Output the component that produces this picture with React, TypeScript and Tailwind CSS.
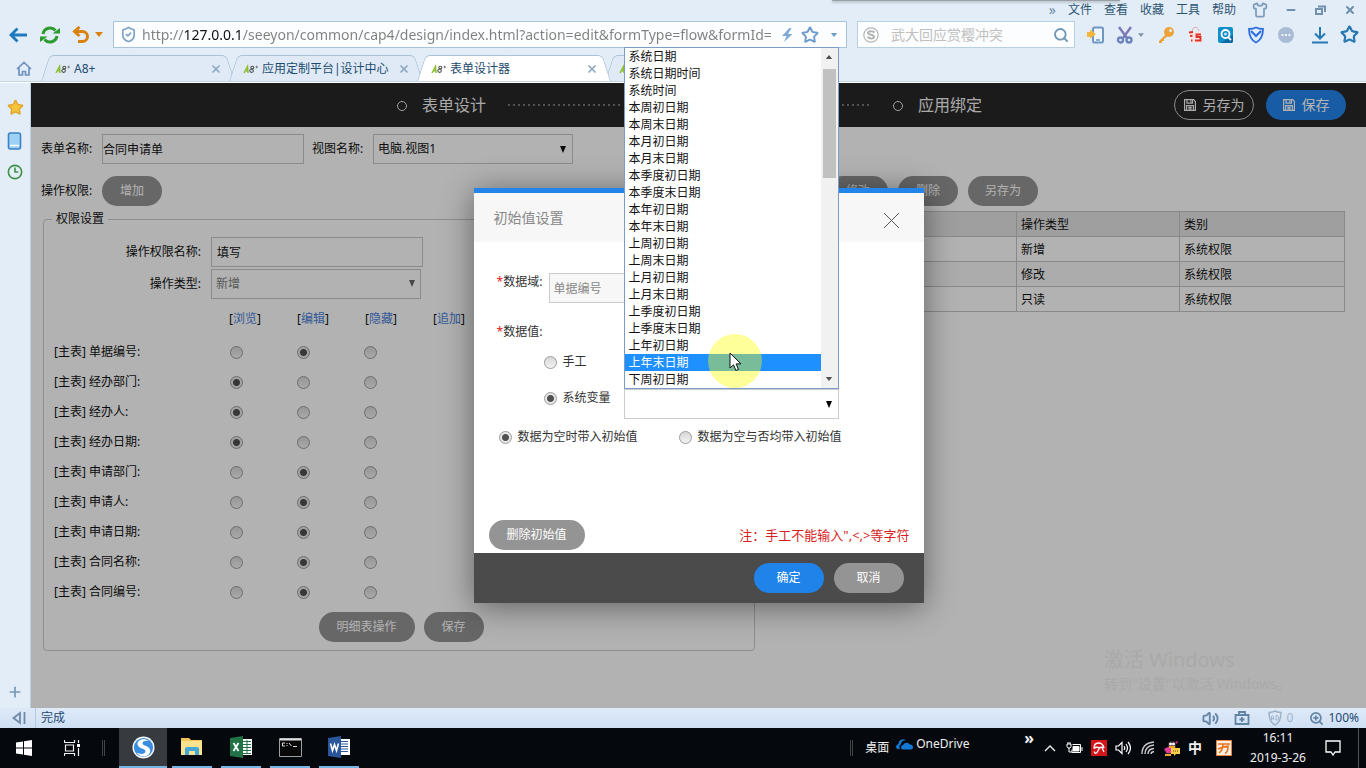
import { ReactNode } from "react";
import {
	ArrowLeft,
	Clock3,
	Home,
	Minus,
	Plus,
	Search,
	Shirt,
	ShieldCheck,
	Star,
	Volume2,
	X,
	ZoomIn,
} from "lucide-react";

const MENUS = ["文件", "查看", "收藏", "工具", "帮助"];

const TABS = [
	{ title: "A8+", active: false },
	{ title: "应用定制平台|设计中心", active: false },
	{ title: "表单设计器", active: true },
	{ title: "", active: false },
];

const FIELDS = [
	{ name: "单据编号", checked: 1 },
	{ name: "经办部门", checked: 0 },
	{ name: "经办人", checked: 0 },
	{ name: "经办日期", checked: 0 },
	{ name: "申请部门", checked: 1 },
	{ name: "申请人", checked: 1 },
	{ name: "申请日期", checked: 1 },
	{ name: "合同名称", checked: 1 },
	{ name: "合同编号", checked: 1 },
];

const MODES = ["浏览", "编辑", "隐藏", "追加"];

const VARIABLES = [
	"系统日期",
	"系统日期时间",
	"系统时间",
	"本周初日期",
	"本周末日期",
	"本月初日期",
	"本月末日期",
	"本季度初日期",
	"本季度末日期",
	"本年初日期",
	"本年末日期",
	"上周初日期",
	"上周末日期",
	"上月初日期",
	"上月末日期",
	"上季度初日期",
	"上季度末日期",
	"上年初日期",
	"上年末日期",
	"下周初日期",
];

const ACTIVE_VARIABLE = "上年末日期";

const URL_TEXT =
	"http://127.0.0.1/seeyon/common/cap4/design/index.html?action=edit&formType=flow&formId=";

/* ---------- shared bits ---------- */

const Caret = ({ className }: { className: string }) => (
	<svg viewBox="0 0 8 5" className={className} aria-hidden="true">
		<path d="M0 0h8L4 5z" fill="currentColor" />
	</svg>
);

const Arrow = ({ className }: { className: string }) => (
	<svg viewBox="0 0 6 7" className={`h-[7px] w-[6px] ${className}`} aria-hidden="true">
		<path d="M0 0h6L3 7z" fill="currentColor" />
	</svg>
);

const Floppy = () => (
	<svg viewBox="0 0 12 12" className="h-3 w-3" fill="none" stroke="currentColor" strokeWidth="1.200" aria-hidden="true">
		<path d="M.6.6h9l1.800 1.800v9H.6zM3 .6v3.600h5.500V.6M6.800 1.500v1.800M2.600 11.400V6.600h6.800v4.800M4.300 8.300h3.400M4.300 9.900h3.400" />
	</svg>
);

type RadioProps = { name: string; label: string; checked?: boolean; id?: string };

const Radio = ({ name, label, checked, id }: RadioProps) => (
	<input
		type="radio"
		id={id}
		name={name}
		aria-label={id ? undefined : label}
		defaultChecked={checked}
		className="h-[13px] w-[13px] shrink-0 appearance-none rounded-full border border-[#9b9b9b] bg-[linear-gradient(#d8d8d8,#f2f2f2)] checked:bg-[radial-gradient(circle,#505050_0,#505050_3px,#e8e8e8_4px)]"
	/>
);

const PillButton = ({ children, className }: { children: ReactNode; className: string }) => (
	<button
		type="button"
		className={`h-[30px] rounded-full text-[12px] leading-[18px] text-white ${className}`}
	>
		{children}
	</button>
);

/* ---------- browser chrome ---------- */

const MenuRow = () => (
	<div className="relative flex h-5 items-center justify-end pr-[10px] text-[12px] text-[#2f5470]">
		<div className="absolute right-[246px] top-0 h-px w-[288px] bg-[#9aa0a6] shadow-[0_1px_3px_#7b8288]" />
		<span className="mr-3 text-[14px] leading-4 text-[#6f8ba6]">»</span>
		<nav className="flex gap-3 leading-4">
			{MENUS.map((m) => (
				<button type="button" key={m}>
					{m}
				</button>
			))}
		</nav>
		<Shirt className="ml-4 h-4 w-4 text-[#7f9cb8]" strokeWidth={2.6} />
		<button type="button" aria-label="最小化" className="ml-[17px] text-[#7090ae]">
			<Minus className="h-3 w-3" strokeWidth={4} />
		</button>
		<button type="button" aria-label="还原" className="ml-[18px]">
			<svg viewBox="0 0 11 11" className="h-[11px] w-[11px]" fill="none" stroke="#7090ae" strokeWidth="2">
				<path d="M1 4h6v5H1zM3 1.500h7v5.500" />
			</svg>
		</button>
		<button type="button" aria-label="关闭" className="ml-[18px] text-[#7090ae]">
			<X className="h-3 w-3" strokeWidth={4} />
		</button>
	</div>
);

const ToolIcons = () => (
	<div className="flex w-[291px] shrink-0 items-center pl-[12px]">
		<svg viewBox="0 0 18 18" className="h-[18px] w-[18px]">
			<rect x="6" y="1.500" width="10" height="15" rx="1.500" fill="#eef5fc" stroke="#6f97c4" strokeWidth="2" />
			<path d="M9 14h4" stroke="#6f97c4" strokeWidth="1.500" />
			<path d="M0 6h3V3.500L9 8l-6 4.500V11H0z" fill="#f5b73b" />
		</svg>
		<svg viewBox="0 0 18 18" className="ml-[11px] h-[18px] w-[18px]" fill="none" strokeWidth="2.400">
			<path d="M3 1l8 11M15 1L7 12" stroke="#7d78b8" />
			<circle cx="4.500" cy="14" r="2.500" stroke="#6d84bd" />
			<circle cx="13" cy="14" r="2.500" stroke="#6d84bd" />
		</svg>
		<Caret className="ml-1 h-[4px] w-[6px] text-[#7f93a8]" />
		<svg viewBox="0 0 18 18" className="ml-[13px] h-[18px] w-[18px]">
			<path d="M9 8L2 15v2h3v-2h2v-2l4-3" fill="#eda23a" />
			<circle cx="12" cy="6" r="5" fill="#eda23a" />
			<circle cx="13.500" cy="4.500" r="1.500" fill="#e2edf8" />
		</svg>
		<svg viewBox="0 0 16 18" className="ml-[13px] h-[18px] w-4">
			<path d="M4 6c0-6 6-6 7-1" fill="none" stroke="#d9a8a8" />
			<path d="M1 7l13-2v12H3z" fill="#fae6e4" />
			<path d="M13 8.500H8.500V11h4v3.500H7M1 6.500l4-.5M2 10l2.500-.3M3 14.500h1.500" fill="none" stroke="#dd3328" strokeWidth="1.900" />
		</svg>
		<svg viewBox="0 0 16 18" className="ml-[14px] h-[18px] w-4">
			<rect y="1" width="15" height="16" rx="2" fill="#108fc9" />
			<path d="M3 17h10a2 2 0 0 0 2-2V9z" fill="#0a69a4" />
			<circle cx="7.500" cy="8" r="4" fill="none" stroke="#fff" strokeWidth="1.800" />
			<circle cx="7.500" cy="8" r="1.500" fill="#bfe4f5" />
			<path d="M10 11l3 3" stroke="#fff" strokeWidth="1.800" />
		</svg>
		<svg viewBox="0 0 16 18" className="ml-[14px] h-[18px] w-4" fill="none" stroke="#2f6fe0" strokeWidth="1.800">
			<path d="M8 1.500c2 1 4 1.500 7 1.500 0 6-2 11-7 13.500C3 14 1 9 1 3c3 0 5-.5 7-1.500z" />
			<path d="M3 5l5 5 5-5" strokeWidth="2.200" />
		</svg>
		<svg viewBox="0 0 16 16" className="ml-[14px] h-4 w-4">
			<circle cx="8" cy="8" r="8" fill="#a9bcd4" />
			<path d="M3.500 8h2M7 8h2M10.500 8h2" stroke="#eef4fa" strokeWidth="2" />
		</svg>
		<svg viewBox="0 0 16 18" className="ml-[18px] h-[18px] w-4" fill="none" stroke="#2878b4" strokeWidth="2">
			<path d="M8 1v11M3 7.500l5 5 5-5M0 16.500h16" />
		</svg>
		<Star className="ml-[12px] h-[19px] w-[19px] text-[#2878b4]" strokeWidth={2.8} />
	</div>
);

const AddressRow = () => (
	<div className="flex h-[29px] items-center">
		<div className="flex w-[113px] shrink-0 items-center pl-[9px]">
			<button type="button" aria-label="后退">
				<svg viewBox="0 0 18 16" className="h-4 w-[18px]" fill="none" stroke="#2079bd" strokeWidth="2.800">
					<path d="M8.500 1.500L2 8l6.500 6.500M2.500 8H18" />
				</svg>
			</button>
			<button type="button" aria-label="刷新" className="ml-[13px]">
				<svg viewBox="0 0 20 20" className="h-5 w-5" fill="none" stroke="#2d9a2d" strokeWidth="3">
					<path d="M3 9a7.200 7.200 0 0 1 12.500-3.500M17 11a7.200 7.200 0 0 1-12.500 3.500" />
					<path d="M12.500 8.500H20V3zM7.500 11.500H0V17z" fill="#2d9a2d" stroke="none" />
				</svg>
			</button>
			<button type="button" aria-label="撤销" className="ml-3">
				<svg viewBox="0 0 18 18" className="h-[18px] w-[18px]" fill="none" stroke="#d9820f" strokeWidth="3">
					<path d="M4 5.500h6.500a4.800 4.800 0 0 1 0 10H6" />
					<path d="M7.500 1L2.500 5.500l5 4.500" />
				</svg>
			</button>
			<Caret className="ml-[5px] h-[5px] w-2 text-[#d9820f]" />
		</div>
		<div className="flex h-[27px] min-w-0 flex-1 items-center border border-[#a9c3dc] bg-[#fcfdfe] pl-1.5 pr-2">
			<ShieldCheck className="h-[17px] w-[17px] shrink-0 text-[#7fa3c8]" strokeWidth={2.4} />
			<input
				aria-label="地址"
				defaultValue={URL_TEXT}
				className="ml-[5px] h-6 min-w-0 flex-1 bg-[linear-gradient(90deg,#808080_41px,#111_41px,#111_99px,#808080_99px)] bg-clip-text text-[14px] text-transparent outline-none"
			/>
			<svg viewBox="0 0 11 14" className="ml-1 h-[14px] w-[11px]" fill="#7fa8d4" aria-hidden="true">
				<path d="M7.500 0L0 8h4.500L2 14l8.500-8H6L9.500 0z" />
			</svg>
			<Star className="ml-2 h-[18px] w-[18px] text-[#6d9bcb]" strokeWidth={2.6} />
			<Caret className="ml-[11px] h-[4px] w-[8px] text-[#6d9bcb]" />
		</div>
		<form className="ml-[10px] flex h-[27px] w-[218px] shrink-0 items-center border border-[#b9cfe2] bg-[#fcfdfe] px-[5px]">
			<svg viewBox="0 0 16 16" className="h-4 w-4 shrink-0" fill="none" stroke="#b4b4b4">
				<circle cx="8" cy="8" r="7.200" strokeWidth="1.200" />
				<path d="M11.500 5.500c-2-2-6.500-1.500-6.500.5s6 1.500 6 3.700-4.500 2.300-6.500.3" strokeWidth="2" />
			</svg>
			<input
				aria-label="搜索"
				placeholder="武大回应赏樱冲突"
				className="ml-3 h-6 min-w-0 flex-1 text-[14px] placeholder:text-[#c0c0c0] outline-none"
			/>
			<button type="button" aria-label="搜索">
				<Search className="h-4 w-4 text-[#6f97b8]" strokeWidth={2.8} />
			</button>
		</form>
		<ToolIcons />
	</div>
);

const SiteLogo = () => (
	<svg viewBox="0 0 16 10" className="h-[10px] w-4 shrink-0" aria-hidden="true" fill="none">
		<path d="M1 9l3.500-6.500L5 9M2.500 6.800H5" stroke="#8cbf2e" strokeWidth="1.500" />
		<ellipse cx="9.300" cy="3.500" rx="1.500" ry="1.300" stroke="#555" strokeWidth="1.100" />
		<ellipse cx="8.600" cy="6.800" rx="1.800" ry="1.600" stroke="#555" strokeWidth="1.100" />
		<path d="M12.500 3h2.500M13.700 1.700v2.600" stroke="#777" />
	</svg>
);

const TabRow = () => (
	<div className="mt-1.5 flex h-[26px] items-end pl-4">
		<button type="button" aria-label="主页" className="mb-[5px] mr-[9px] w-4">
			<svg viewBox="0 0 16 15" className="h-[15px] w-4" fill="none" stroke="#6f93bf" strokeWidth="1.700">
				<path d="M1 8l7-6.500L15 8M3 7v7h3.500v-3.500h3V14H13V7" />
			</svg>
		</button>
		{TABS.map(({ title, active }, i) => {
			const fill = active ? "bg-white" : "bg-[#dfeaf6]";
			return (
				<div
					key={i}
					className={`relative -mr-1.5 flex h-[26px] w-[194px] items-center pl-[14px] pr-[13px] ${active ? "z-10" : ""}`}
				>
					<div className={`absolute inset-y-0 left-0 right-1/2 origin-bottom -skew-x-[18deg] rounded-tl-[5px] border-l border-t border-[#a9c3d6] ${fill}`} />
					<div className={`absolute inset-y-0 left-1/2 right-0 origin-bottom skew-x-[18deg] rounded-tr-[5px] border-r border-t border-[#a9c3d6] ${fill}`} />
					<div className="relative flex flex-1 items-center pt-px">
						<SiteLogo />
						<span className="ml-[3px] flex-1 text-[12px] leading-5 text-[#1d4a6e]">{title}</span>
						<button type="button" aria-label="关闭标签">
							<X className="h-3 w-3 text-[#8fa9c2]" strokeWidth={3.5} />
						</button>
					</div>
				</div>
			);
		})}
	</div>
);

const SideBar = () => (
	<aside className="flex w-[31px] shrink-0 flex-col items-center border-r border-[#bcd0e3] bg-[#e3edf7] pb-2 pt-4">
		<Star className="h-[17px] w-[17px] fill-[#f6c43c] text-[#e2a52b]" />
		<svg viewBox="0 0 16 18" className="mt-4 h-[18px] w-4">
			<rect x="1.500" y="1" width="12" height="16" rx="2" fill="#9fd0f5" stroke="#3a83c4" strokeWidth="1.600" />
			<path d="M3 13.500h9" stroke="#fff" strokeWidth="1.500" />
		</svg>
		<Clock3 className="mt-[14px] h-4 w-4 text-[#3f8f45]" strokeWidth={2.4} />
		<button type="button" aria-label="添加" className="mt-auto">
			<Plus className="h-4 w-4 text-[#7899b8]" strokeWidth={2.6} />
		</button>
	</aside>
);

/* ---------- form designer page ---------- */

const Step = ({ title }: { title: string }) => (
	<div className="flex items-center">
		<span className="mt-0.5 h-[10px] w-[10px] rounded-full border border-[#e4e4e4]" />
		<span className="ml-[15px] text-[16px] leading-6 text-[#f2f2f2]">{title}</span>
	</div>
);

const Dots = () => (
	<span className="h-[2px] w-28 bg-[repeating-linear-gradient(90deg,#777_0,#777_2px,transparent_2px,transparent_5px)]" />
);

const DesignerHeader = () => (
	<header className="flex h-11 items-center bg-[#272727] pl-0.5 pr-5">
		<div className="flex-1" />
		<div className="flex w-[585px] items-center">
			<Step title="表单设计" />
			<span className="w-[22px]" />
			<Dots />
			<span className="flex-1" />
			<Dots />
			<span className="w-6" />
			<Step title="应用绑定" />
		</div>
		<div className="flex flex-1 justify-end gap-3">
			<button
				type="button"
				className="flex h-[30px] w-20 items-center justify-center gap-[7px] rounded-full border border-[#c4c4c4] text-[14px] leading-5 text-[#f4f4f4]"
			>
				<Floppy />
				另存为
			</button>
			<button
				type="button"
				className="flex h-[30px] w-20 items-center justify-center gap-[7px] rounded-full bg-[#2384ec] text-[14px] leading-5 text-white"
			>
				<Floppy />
				保存
			</button>
		</div>
	</header>
);

const PermissionForm = () => (
	<fieldset className="w-[712px] shrink-0 rounded-[4px] border border-[#ccc] pb-2">
		<legend className="ml-2 px-1 leading-[18px]">权限设置</legend>
		<div className="mt-[9px] flex items-center">
			<label htmlFor="perm-name" className="w-[157px] text-right">
				操作权限名称:
			</label>
			<input
				id="perm-name"
				defaultValue="填写"
				className="ml-[10px] h-[30px] w-[212px] border border-[#c8c8c8] px-[5px]"
			/>
		</div>
		<div className="mt-0.5 flex items-center">
			<label htmlFor="perm-type" className="w-[157px] text-right">
				操作类型:
			</label>
			<div className="relative ml-[10px] w-[210px]">
				<select
					id="perm-type"
					className="block h-[30px] w-full appearance-none border border-[#c8c8c8] px-1 text-[#808080]"
				>
					<option>新增</option>
				</select>
				<Arrow className="absolute right-[6px] top-[11px] text-[#666]" />
			</div>
		</div>
		<div className="mt-[11px] grid grid-cols-[157px_68px_68px_68px_68px] pl-[10px] text-center leading-[18px]">
			<span />
			{MODES.map((m) => (
				<span key={m}>
					[
					<a href="#" className="text-[#4a7fd8]">
						{m}
					</a>
					]
				</span>
			))}
		</div>
		<div className="mt-[9px]">
			{FIELDS.map(({ name, checked }) => (
				<div key={name} className="grid h-[30px] grid-cols-[176px_67px_67px_67px] items-center pl-[10px]">
					<span>[主表] {name}:</span>
					{MODES.slice(0, 3).map((m, i) => (
						<Radio key={m} name={name} label={`${name} ${m}`} checked={i === checked} />
					))}
				</div>
			))}
		</div>
		<div className="mt-[5px] flex justify-center gap-[9px] pl-1">
			<PillButton className="w-24 bg-[#949494]">明细表操作</PillButton>
			<PillButton className="w-[60px] bg-[#949494]">保存</PillButton>
		</div>
	</fieldset>
);

const PermissionTable = () => (
	<table className="mt-px h-[101px] flex-1 table-fixed border-collapse border border-[#c4c4c4] text-left">
		<thead>
			<tr className="h-[25px] bg-[#e4e4e4]">
				<th className="border border-[#c4c4c4] px-1 pt-0.5 font-normal" />
				<th className="w-[163px] border border-[#c4c4c4] px-1 pt-0.5 font-normal">操作类型</th>
				<th className="w-[165px] border border-[#c4c4c4] px-1 pt-0.5 font-normal">类别</th>
			</tr>
		</thead>
		<tbody>
			{["新增", "修改", "只读"].map((type) => (
				<tr key={type} className="h-[25px] even:bg-[#f7f7f7]">
					<td className="border border-[#c4c4c4] px-1 pt-0.5" />
					<td className="border border-[#c4c4c4] px-1 pt-0.5">{type}</td>
					<td className="border border-[#c4c4c4] px-1 pt-0.5">系统权限</td>
				</tr>
			))}
		</tbody>
	</table>
);

const VariableList = () => (
	<div className="absolute bottom-full left-0 z-30 flex w-[215px] border border-[#7a9cc6] bg-white">
		<ul role="listbox" aria-label="系统变量" className="flex-1">
			{VARIABLES.map((v) => (
				<li
					key={v}
					role="option"
					aria-selected={v === ACTIVE_VARIABLE}
					className={`h-[17px] px-1 leading-[17px] ${v === ACTIVE_VARIABLE ? "bg-[#1e90ff] text-white" : "text-[#111]"}`}
				>
					{v}
				</li>
			))}
		</ul>
		<div className="flex w-[17px] flex-col items-center bg-[#f1f1f1] py-[7px]">
			<Caret className="h-[4px] w-[8px] rotate-180 text-[#505050]" />
			<div className="mt-[10px] h-[109px] w-[13px] bg-[#c1c1c1]" />
			<Caret className="mt-auto h-[4px] w-[8px] text-[#505050]" />
		</div>
		{/* highlighted mouse pointer */}
		<div className="absolute left-[83px] top-[286px] h-[54px] w-[54px] rounded-full bg-[#ffff00]/40">
			<svg viewBox="0 0 13 20" className="ml-[21px] mt-[18px] h-5 w-[13px]">
				<path d="M1 1v15l3.500-3.200 2.400 5.700 2.600-1.100-2.400-5.500H12z" fill="#fff" stroke="#111" />
			</svg>
		</div>
	</div>
);

const InitialValueDialog = () => (
	<section
		role="dialog"
		aria-label="初始值设置"
		className="flex h-[415px] w-[450px] flex-col border-t-[5px] border-[#2384ea] bg-white text-[12px] leading-[18px] text-[#333] shadow-[0_4px_30px_rgba(0,0,0,0.45)]"
	>
		<div className="flex h-[49px] items-center justify-between bg-[#f7f7f7] pl-5 pr-6">
			<h2 className="text-[14px] text-[#888]">初始值设置</h2>
			<button type="button" aria-label="关闭" className="pt-1.5">
				<svg viewBox="0 0 17 17" className="h-[17px] w-[17px]" stroke="#555">
					<path d="M1 1l15 15M16 1L1 16" />
				</svg>
			</button>
		</div>
		<div className="flex flex-1 flex-col pb-[3px] pt-[31px]">
			<div className="flex items-start pl-[23px]">
				<label htmlFor="data-field" className="w-[52px]">
					<span className="text-[#e02020]">*</span>数据域:
				</label>
				<input
					id="data-field"
					defaultValue="单据编号"
					readOnly
					className="h-[30px] w-[290px] border border-[#ccc] bg-[#f7f7f7] px-1 text-[#888]"
				/>
			</div>
			<div className="mt-5 pl-[23px]">
				<span className="text-[#e02020]">*</span>数据值:
			</div>
			<div className="mt-3 flex items-center pl-[70px]">
				<Radio id="src-manual" name="source" label="手工" />
				<label htmlFor="src-manual" className="ml-1.5">
					手工
				</label>
			</div>
			<div className="mt-[18px] flex items-start pl-[70px]">
				<div className="flex w-[80px] items-center">
					<Radio id="src-system" name="source" label="系统变量" checked />
					<label htmlFor="src-system" className="ml-1.5">
						系统变量
					</label>
				</div>
				<div className="relative">
					<select
						aria-label="系统变量"
						className="block h-[30px] w-[215px] appearance-none border border-[#ccc] bg-white px-1"
					>
						<option />
					</select>
					<Arrow className="absolute right-[7px] top-3 text-black" />
					<VariableList />
				</div>
			</div>
			<div className="mt-[9px] flex items-center pl-[25px]">
				<div className="flex w-[180px] items-center">
					<Radio id="when-empty" name="when" label="数据为空时带入初始值" checked />
					<label htmlFor="when-empty" className="ml-1.5">
						数据为空时带入初始值
					</label>
				</div>
				<Radio id="when-any" name="when" label="数据为空与否均带入初始值" />
				<label htmlFor="when-any" className="ml-1.5">
					数据为空与否均带入初始值
				</label>
			</div>
			<div className="mt-auto flex items-center justify-between pl-[15px] pr-[14px]">
				<PillButton className="w-24 bg-[#949494]">删除初始值</PillButton>
				<p className="text-[13px] text-[#d81e1e]">注：手工不能输入",&lt;,&gt;等字符</p>
			</div>
		</div>
		<div className="flex h-[50px] items-center justify-end gap-[10px] bg-[#4b4b4b] pr-5">
			<PillButton className="w-[70px] bg-[#1f83ea]">确定</PillButton>
			<PillButton className="w-[70px] bg-[#949494]">取消</PillButton>
		</div>
	</section>
);

const Designer = () => (
	<main className="relative min-w-0 flex-1 bg-white text-[12px] text-[#111]">
		<DesignerHeader />
		<div className="pl-[10px] pr-[21px] pt-[7px]">
			<div className="flex items-center">
				<label htmlFor="form-name" className="w-[61px]">
					表单名称:
				</label>
				<input
					id="form-name"
					defaultValue="合同申请单"
					className="h-[30px] w-[202px] border border-[#c8c8c8]"
				/>
				<label htmlFor="view-name" className="ml-2 w-[61px]">
					视图名称:
				</label>
				<div className="relative w-[200px]">
					<select
						id="view-name"
						className="block h-[30px] w-full appearance-none border border-[#c8c8c8] px-1"
					>
						<option>电脑.视图1</option>
					</select>
					<Arrow className="absolute right-[7px] top-3" />
				</div>
			</div>
			<div className="mt-3 flex items-center">
				<span className="w-[61px]">操作权限:</span>
				<PillButton className="w-[60px] bg-[#949494]">增加</PillButton>
				<div className="ml-[666px] flex gap-[10px]">
					<PillButton className="w-[60px] bg-[#949494]">修改</PillButton>
					<PillButton className="w-[60px] bg-[#949494]">删除</PillButton>
					<PillButton className="w-[70px] bg-[#949494]">另存为</PillButton>
				</div>
			</div>
			<div className="mt-1 flex items-start gap-[10px] pl-0.5">
				<PermissionForm />
				<PermissionTable />
			</div>
		</div>
		<div className="absolute bottom-3 right-[70px] w-[192px] whitespace-nowrap text-[#f3f3f3]">
			<p className="text-[20px] leading-6">激活 Windows</p>
			<p className="text-[14px] leading-6">转到"设置"以激活 Windows。</p>
		</div>
		<div className="absolute inset-0 z-20 flex items-center justify-center bg-black/30">
			<InitialValueDialog />
		</div>
	</main>
);

/* ---------- bottom bars ---------- */

const StatusBar = () => (
	<footer className="flex h-5 items-center bg-[linear-gradient(#dfeaf8,#cfe0f4)] pr-[7px] text-[12px] text-[#1c4a73]">
		<svg viewBox="0 0 14 14" className="ml-3 h-[14px] w-[14px]" fill="none" stroke="#6d8aa8" strokeWidth="1.800">
			<path d="M8 2v10L1.500 7zM12.500 1v12" />
		</svg>
		<span className="ml-[9px] h-5 w-px bg-[#b4cae0]" />
		<span className="ml-[5px] flex-1">完成</span>
		<Volume2 className="h-[17px] w-[17px] text-[#6486a6]" strokeWidth={2.6} />
		<svg viewBox="0 0 16 16" className="ml-[15px] h-4 w-4" fill="none" stroke="#5f83a3" strokeWidth="1.800">
			<path d="M1.500 5h13v9h-13zM5 5V2h6v3M8 7v5M5.500 9.500h5" />
		</svg>
		<svg viewBox="0 0 14 16" className="ml-[18px] h-4 w-[14px]" fill="none" stroke="#9fb4c8">
			<path d="M7 1c2 1 4 1.500 6 1.500 0 6-1 10-6 12.500C2 12.500 1 8.500 1 2.500 3 2.500 5 2 7 1z" strokeWidth="1.500" />
			<path d="M3.500 10V6.500l1-1 1 1V10M3.500 8.500h2M8 5.500v4.500h1.500l1-1v-2.500l-1-1z" />
		</svg>
		<span className="ml-[5px] text-[#9fb4c8]">0</span>
		<ZoomIn className="ml-4 mr-1 h-[15px] w-[15px] text-[#6486a6]" strokeWidth={2.8} />
		<span>100%</span>
	</footer>
);

type TaskProps = { label: string; active?: boolean; children: ReactNode };

const Task = ({ label, active, children }: TaskProps) => (
	<button
		type="button"
		aria-label={label}
		className={`flex h-10 items-center justify-center border-b-2 border-[#76b5e8] ${active ? "w-12 bg-[#373a3e]" : "w-10"}`}
	>
		{children}
	</button>
);

const TaskBar = () => (
	<footer className="flex h-10 items-center bg-[#05090e] text-[12px] leading-4 text-[#f0f0f0]">
		<button type="button" aria-label="开始" className="ml-4">
			<svg viewBox="0 0 16 16" className="h-4 w-4" fill="#fff">
				<path d="M0 2.500l7-1v6H0zM8 1.300L16 0v7.500H8zM0 8.500h7v6l-7-1zM8 8.500h8V16l-8-1.300z" />
			</svg>
		</button>
		<button type="button" aria-label="任务视图" className="ml-8">
			<svg viewBox="0 0 16 16" className="h-4 w-4" fill="none" stroke="#f0f0f0" strokeWidth="1.200">
				<path d="M.5 0v2.500h10V0M1.500 5h8v6h-8zM.5 16v-2.500h10V16M14.500 0v3M14.500 8v8" />
				<path d="M13 4h3v3h-3z" fill="#fff" stroke="none" />
			</svg>
		</button>
		<span className="ml-[22px] mr-[14px] h-4 w-[3px] border-x border-[#444]" />
		<Task label="搜狗浏览器" active>
			<svg viewBox="0 0 24 24" className="h-[23px] w-[23px]">
				<circle cx="12" cy="12" r="11.500" fill="#f4f8fc" />
				<circle cx="12" cy="12" r="10" fill="#3a8ee0" />
				<path d="M18 5.500C12 1 4.500 4.500 6 9.500c1.200 4 8 3.500 8 6.500s-5 3.500-9 1.500c4 6.500 14.500 4 14-2.500-.4-5-8-4.500-8-7.500 0-2.200 4-3 7-2z" fill="#fff" />
			</svg>
		</Task>
		<div className="ml-[5px] flex gap-[9px]">
			<Task label="文件资源管理器">
				<svg viewBox="0 0 22 20" className="h-5 w-[22px]">
					<path d="M0 1h8l2 2h11v15H0z" fill="#f0c65a" />
					<path d="M0 4h21v14H0z" fill="#fbe28c" />
					<path d="M4 18v-7l2-1h10l2 1v7h-4v-4H8v4z" fill="#45a6d8" />
				</svg>
			</Task>
			<Task label="Excel">
				<svg viewBox="0 0 22 22" className="h-[22px] w-[22px]">
					<path d="M12 3h10v16H12z" fill="#fff" />
					<path d="M13 5.500h8M13 8.500h8M13 11.500h8M13 14.500h8M13 17.500h8M17 4v14" stroke="#217346" />
					<path d="M0 2l13-2v22L0 20z" fill="#217346" />
					<path d="M3.500 7l5 8M8.500 7l-5 8" stroke="#fff" strokeWidth="1.800" />
				</svg>
			</Task>
			<Task label="命令提示符">
				<svg viewBox="0 0 23 19" className="h-[19px] w-[23px]">
					<path d="M.5.500h22v18H.5z" fill="#080808" stroke="#a0a0a0" />
					<path d="M1 1.500h21" stroke="#e0e0e0" strokeWidth="2" />
					<path d="M6 5H3.500v3H6M8 5v1M8 7v1M10 5l2.500 3M14 8.500h4" fill="none" stroke="#ddd" />
				</svg>
			</Task>
			<Task label="Word">
				<svg viewBox="0 0 22 22" className="h-[22px] w-[22px]">
					<path d="M12 3h10v16H12z" fill="#fff" />
					<path d="M13 5.500h7M13 8h7M13 10.500h7M13 13h7M13 15.500h7" stroke="#2b579a" />
					<path d="M0 2l13-2v22L0 20z" fill="#2b579a" />
					<path d="M2.500 7.500l2 7 2-6 2 6 2-7" fill="none" stroke="#fff" strokeWidth="1.600" />
				</svg>
			</Task>
		</div>
		<div className="flex-1" />
		<span className="mr-3 h-4 w-[3px] border-x border-[#444]" />
		<span>桌面</span>
		<div className="mb-2 ml-[7px] flex w-[128px] items-center">
			<svg viewBox="0 0 17 12" className="mr-[3px] h-3 w-[17px]" fill="#1479d2">
				<path d="M0 9a3 3 0 0 1 2.500-3A4.500 4.500 0 0 1 10 2.500 4 4 0 0 0 5 6a4 4 0 0 0-1 5H2a2 2 0 0 1-2-2z" />
				<path d="M5 9.500A2.500 2.500 0 0 1 7 7a4 4 0 0 1 7-.5 3 3 0 0 1 3 3 2 2 0 0 1-2 2H7a2 2 0 0 1-2-2z" />
			</svg>
			OneDrive
		</div>
		<span className="mb-5 text-[16px] font-bold leading-4">»</span>
		<div className="ml-[10px] flex items-center">
			<svg viewBox="0 0 12 8" className="h-2 w-3" fill="none" stroke="#eee" strokeWidth="1.400">
				<path d="M1 7l5-5 5 5" />
			</svg>
			<svg viewBox="0 0 17 13" className="ml-[10px] h-[13px] w-[17px]" fill="none" stroke="#fff">
				<path d="M6.500 2.500h8v8H6v-3M16 5v4M1 2h4v2.500L4 6H2L1 4.500zM2 0v2M4 0v2M3 6v4h3" />
				<path d="M7 4.500h6v4.500H7z" fill="#fff" />
			</svg>
			<svg viewBox="0 0 16 16" className="ml-2 h-4 w-4">
				<path d="M0 0h16v16H0z" fill="#d4151c" />
				<path d="M3 8.500C3 1 11.500 1.500 13 8M3 8.500c2-1.500 4-1.500 5.500-.5 1.500-1 3-1 4.500 0M8.500 8L6 12.500c-1 1.500-3 .5-2.500-1M11 8l2 4" fill="none" stroke="#fff" strokeWidth="1.300" />
			</svg>
			<svg viewBox="0 0 16 14" className="ml-2 h-[14px] w-4" fill="none" stroke="#fff" strokeWidth="1.200">
				<path d="M1 5h2.500L7 1.500v11L3.500 9H1zM9 5q1.500 2 0 4M11 3q3 4 0 8M13 1q5 6 0 12" />
			</svg>
			<svg viewBox="0 0 14 14" className="ml-[10px] h-[14px] w-[14px]" fill="none" stroke="#ccc" strokeWidth="1.400">
				<path d="M1 13Q1 2 13 1M4 13Q4 5 13 4M7 13Q7 8 13 7.500M10 13q0-2 3-2.500" />
			</svg>
			<svg viewBox="0 0 16 16" className="ml-[9px] h-4 w-4">
				<path d="M4 5a4 4 0 0 1 8 0v3l2 3v3H2l-2-4 4-3z" fill="#3a2a30" />
				<path d="M0 9l4-2 3 1v5H3z" fill="#e23a9c" />
				<circle cx="6.500" cy="4" r="1.500" fill="#fff" />
				<circle cx="9.500" cy="4" r="1.500" fill="#fff" />
				<path d="M9 0l2 2 3-1-1 3z" fill="#e22aa0" />
				<path d="M5 6h6v2H5zM1 14h6v2H1z" fill="#f2a52c" />
				<path d="M7 8h9v6h-4l-2 2v-2H7z" fill="#f8cf46" />
				<path d="M9 11h1M11 11h1M13 11h1" stroke="#5a4410" />
			</svg>
			<span className="ml-2 text-[14px] font-bold leading-4">中</span>
			<svg viewBox="0 0 16 16" className="ml-[14px] h-4 w-4">
				<path d="M.5.500h15v15H.5z" fill="#f7f0e8" stroke="#f08030" />
				<path d="M2 4h12M7 4q0 6-4 9M7 7h5q0 5-3 6.500M2 9q6-3 11-3" fill="none" stroke="#e8701a" strokeWidth="1.500" />
			</svg>
		</div>
		<div className="ml-[15px] w-[62px] text-center leading-5">
			<div>16:11</div>
			<div>2019-3-26</div>
		</div>
		<button type="button" aria-label="通知" className="ml-4 mr-[17px]">
			<svg viewBox="0 0 16 16" className="h-4 w-4" fill="none" stroke="#fff" strokeWidth="1.300">
				<path d="M1 1h14v11H10l-2 3-2-3H1z" />
			</svg>
		</button>
		<span className="mr-[7px] h-10 w-px bg-[#555]" />
	</footer>
);

export default function App() {
	return (
		<div className="flex min-h-screen flex-col bg-[#e2edf8] font-['Noto_Sans','Noto_Sans_CJK_SC',sans-serif]">
			<MenuRow />
			<AddressRow />
			<TabRow />
			<div className="h-[2px] border-t border-[#c4d4e2] bg-white" />
			<div className="flex flex-1">
				<SideBar />
				<Designer />
			</div>
			<StatusBar />
			<TaskBar />
		</div>
	);
}
